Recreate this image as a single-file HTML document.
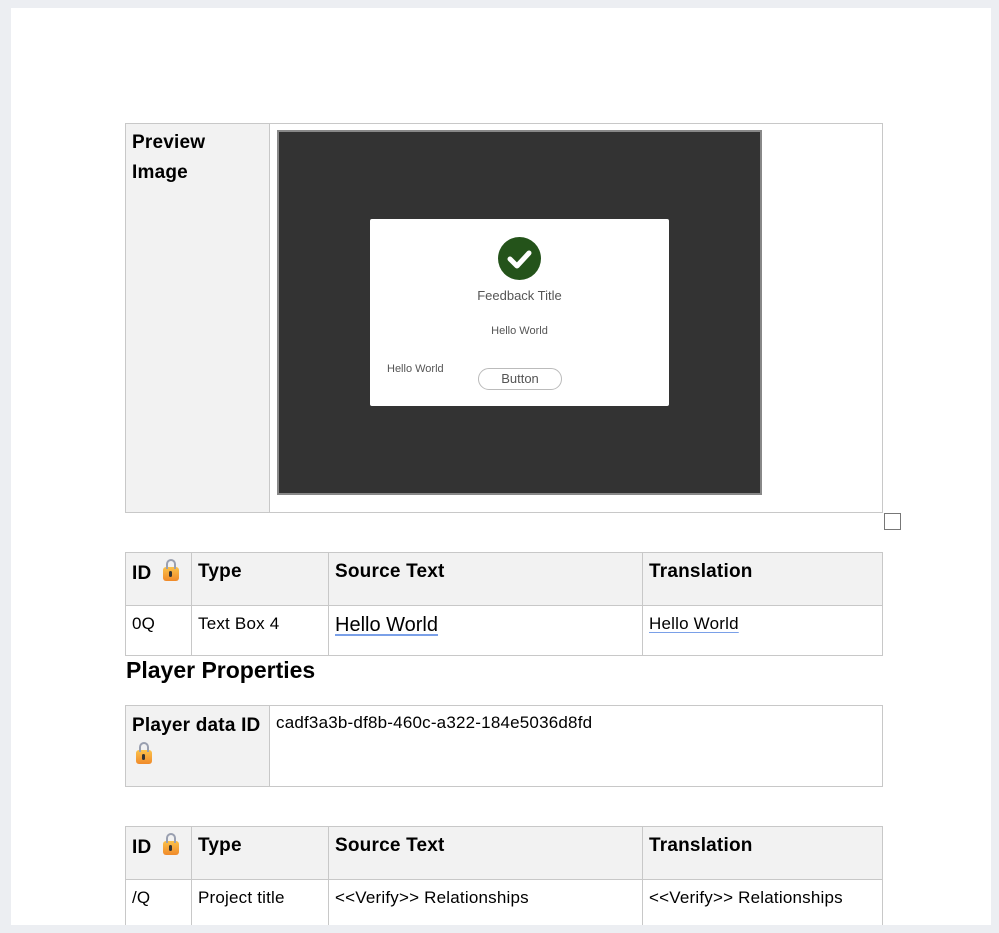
<!DOCTYPE html>
<html><head><style>
html,body{margin:0;width:999px;height:933px;overflow:hidden}
body{background:#eceef2;position:relative;font-family:"Liberation Sans",sans-serif;color:#000}
.page{position:absolute;left:11px;top:8px;width:980px;height:917px;background:#fff}
.a{position:absolute}
.cell{position:absolute;box-sizing:border-box;border:1px solid #c8c8c8}
.g{background:#f2f2f2}
.h{font-weight:bold;font-size:19px;letter-spacing:0.2px}
.t{font-size:17px;letter-spacing:0.2px}
.lock{display:inline-block;width:16px;height:14px;background:linear-gradient(#fbc24a,#f08a2a);border-radius:3px;position:relative;vertical-align:-2px;margin-left:12px}
.lock:before{content:"";position:absolute;left:3px;top:-8px;width:6px;height:8px;border:2px solid #9aa0b0;border-bottom:none;border-radius:5px 5px 0 0}
.lock:after{content:"";position:absolute;left:6px;top:4px;width:3px;height:6px;background:#333;border-radius:2px}
.u{text-decoration:underline;text-decoration-color:#7aa0e8;text-underline-offset:3px}
</style></head><body>
<div class="page"></div>
<div class="cell g" style="left:125px;top:123px;width:145px;height:390px"></div>
<div class="cell" style="left:269px;top:123px;width:614px;height:390px"></div>
<div class="a h" style="left:132px;top:128px;line-height:30px">Preview<br>Image</div>
<div class="a" style="left:277px;top:130px;width:485px;height:365px;background:#333;box-sizing:border-box;border:2px solid #888"></div>
<div class="a" style="left:370px;top:219px;width:299px;height:187px;background:#fff;border-radius:2px"></div>
<div class="a" style="left:498px;top:237px;width:43px;height:43px;border-radius:50%;background:#24531a"></div>
<svg class="a" style="left:498px;top:237px" width="43" height="43"><path d="M12 22 L19 29 L31 16" stroke="#fff" stroke-width="5" fill="none" stroke-linecap="round" stroke-linejoin="round"/></svg>
<div class="a" style="left:370px;width:299px;top:288px;text-align:center;font-size:13px;color:#555">Feedback Title</div>
<div class="a" style="left:370px;width:299px;top:325px;text-align:center;font-size:11px;color:#555">Hello World</div>
<div class="a" style="left:387px;top:363px;font-size:11px;color:#555">Hello World</div>
<div class="a" style="left:478px;top:368px;width:84px;height:22px;box-sizing:border-box;border:1px solid #bbb;border-radius:11px;text-align:center;font-size:13px;line-height:20px;color:#555">Button</div>
<div class="a" style="left:884px;top:513px;width:17px;height:17px;box-sizing:border-box;border:1px solid #777"></div>
<div class="cell g" style="left:125px;top:552px;width:67px;height:54px"></div>
<div class="cell g" style="left:191px;top:552px;width:138px;height:54px"></div>
<div class="cell g" style="left:328px;top:552px;width:315px;height:54px"></div>
<div class="cell g" style="left:642px;top:552px;width:241px;height:54px"></div>
<div class="cell" style="left:125px;top:605px;width:67px;height:51px"></div>
<div class="cell" style="left:191px;top:605px;width:138px;height:51px"></div>
<div class="cell" style="left:328px;top:605px;width:315px;height:51px"></div>
<div class="cell" style="left:642px;top:605px;width:241px;height:51px"></div>
<div class="a h" style="left:132px;top:563px">ID<span class="lock"></span></div>
<div class="a h" style="left:198px;top:561px">Type</div>
<div class="a h" style="left:335px;top:561px">Source Text</div>
<div class="a h" style="left:649px;top:561px">Translation</div>
<div class="a t" style="left:132px;top:614px">0Q</div>
<div class="a t" style="left:198px;top:614px">Text Box 4</div>
<div class="a u" style="left:335px;top:614px;font-size:20px">Hello World</div>
<div class="a t u" style="left:649px;top:614px">Hello World</div>
<div class="a" style="left:126px;top:657px;font-size:23px;font-weight:bold">Player Properties</div>
<div class="cell g" style="left:125px;top:705px;width:145px;height:82px"></div>
<div class="cell" style="left:269px;top:705px;width:614px;height:82px"></div>
<div class="a h" style="left:132px;top:710px;line-height:31px">Player data ID<br><span class="lock" style="margin-left:4px"></span></div>
<div class="a t" style="left:276px;top:713px">cadf3a3b-df8b-460c-a322-184e5036d8fd</div>
<div class="cell g" style="left:125px;top:826px;width:67px;height:54px"></div>
<div class="cell g" style="left:191px;top:826px;width:138px;height:54px"></div>
<div class="cell g" style="left:328px;top:826px;width:315px;height:54px"></div>
<div class="cell g" style="left:642px;top:826px;width:241px;height:54px"></div>
<div class="cell" style="left:125px;top:879px;width:67px;height:60px"></div>
<div class="cell" style="left:191px;top:879px;width:138px;height:60px"></div>
<div class="cell" style="left:328px;top:879px;width:315px;height:60px"></div>
<div class="cell" style="left:642px;top:879px;width:241px;height:60px"></div>
<div class="a h" style="left:132px;top:837px">ID<span class="lock"></span></div>
<div class="a h" style="left:198px;top:835px">Type</div>
<div class="a h" style="left:335px;top:835px">Source Text</div>
<div class="a h" style="left:649px;top:835px">Translation</div>
<div class="a t" style="left:132px;top:888px">/Q</div>
<div class="a t" style="left:198px;top:888px">Project title</div>
<div class="a t" style="left:335px;top:888px">&lt;&lt;Verify&gt;&gt; Relationships</div>
<div class="a t" style="left:649px;top:888px">&lt;&lt;Verify&gt;&gt; Relationships</div>
<div class="a" style="left:0;top:925px;width:999px;height:20px;background:#eceef2"></div>
</body></html>
